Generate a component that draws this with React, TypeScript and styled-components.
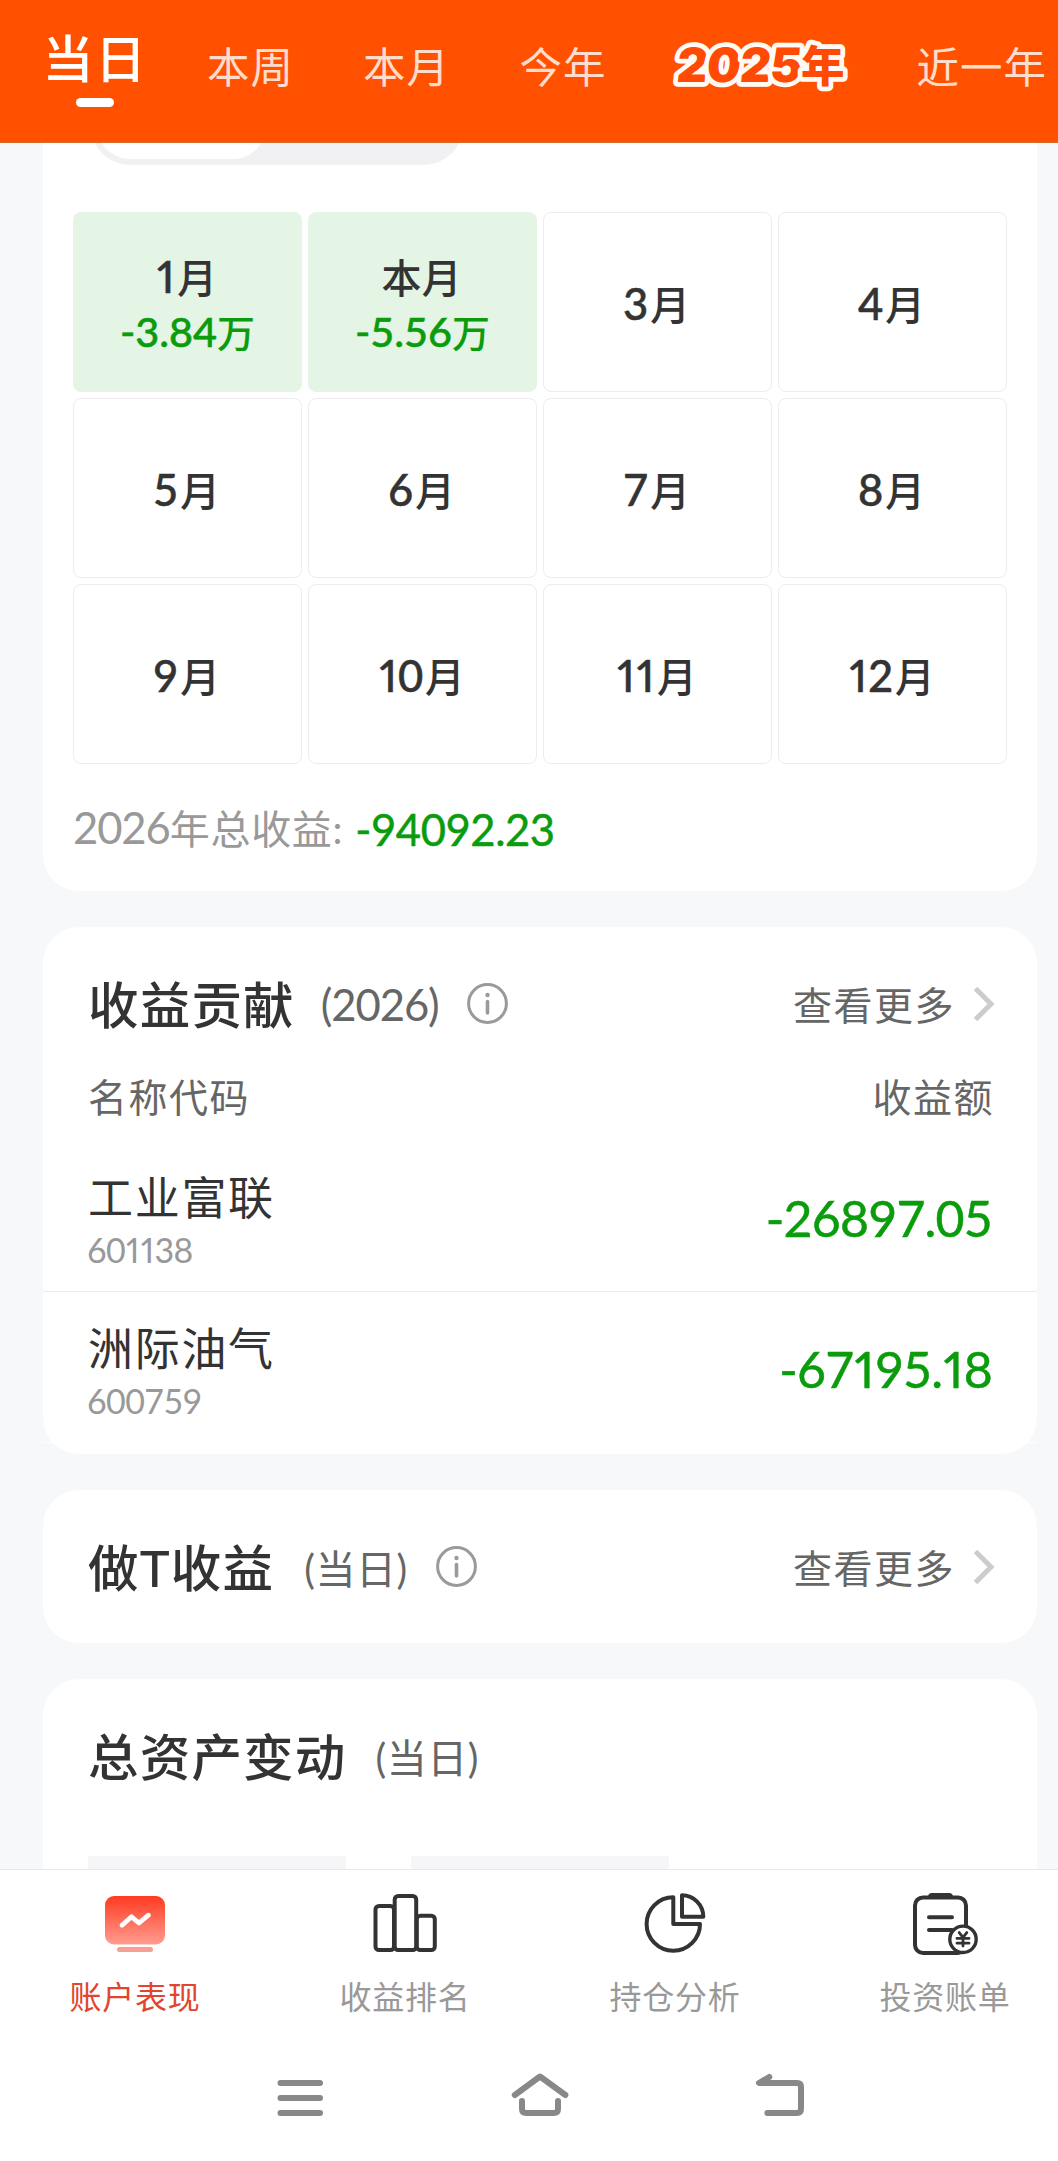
import React from "react";
import styled, { createGlobalStyle } from "styled-components";

const GlobalStyle = createGlobalStyle`
  html, body { margin: 0; padding: 0; overflow: hidden; background: #f7f8fa; }
  * { box-sizing: border-box; }
  svg { display: block; flex: none; }
`;

const GREEN = "#0a9c0c";

const Viewport = styled.div`
  width: 1058px;
  height: 2161px;
  overflow: hidden;
`;

const Page = styled.div`
  width: 1080px;
  height: 2161px;
  display: flex;
  flex-direction: column;
  background: #f7f8fa;
  color: #333;
  font-family: Lato, "Noto Sans CJK SC", sans-serif;
  white-space: nowrap;
`;

/* ---------- figures ---------- */

const FigureText = styled.span<{ $medium?: boolean }>`
  -webkit-text-stroke: ${(p) => (p.$medium ? "0.5px currentColor" : "0")};
`;

const NarrowOne = styled.span`
  margin: 0 0.025em;
  font-feature-settings: "pnum";
`;

const Figures = ({ text, medium }: { text: string; medium?: boolean }) => (
  <FigureText $medium={medium}>
    {text.split(/(1)/).map((part, i) => (part === "1" ? <NarrowOne key={i}>1</NarrowOne> : part))}
  </FigureText>
);

const Num = styled.span`
  font-size: 1.09em;
  line-height: 0;
`;

/* ---------- period tabs ---------- */

const TabBar = styled.header`
  flex: none;
  height: 143px;
  display: flex;
  align-items: flex-start;
  padding: 41px 0 0 43px;
  background: #ff5100;
  border-bottom: 1px solid #d96a2c;
`;

const Tab = styled.div<{ $gap: number }>`
  margin-left: ${(p) => p.$gap}px;
  font-size: 42.5px;
  line-height: 52px;
  letter-spacing: 1px;
  color: #ffdccb;
`;

const ActiveTab = styled.div`
  width: 104px;
  margin-top: -12px;
  display: flex;
  flex-direction: column;
  align-items: center;
  font-size: 51px;
  line-height: 60px;
  letter-spacing: 1.5px;
  font-weight: 500;
  color: #fff;
`;

const Indicator = styled.span`
  width: 38px;
  height: 9px;
  margin-top: 9px;
  border-radius: 5px;
  background: #fff;
`;

const BadgeSvg = styled.svg`
  margin: -19px 0 0 57px;
  overflow: visible;

  text {
    font-weight: 900;
    fill: #ff4a05;
    stroke: #fffaf3;
    stroke-width: 9.5px;
    stroke-linejoin: round;
    paint-order: stroke fill;
  }
`;

const YearBadge = () => (
  <BadgeSvg width="192" height="88" viewBox="0 0 192 88">
    <text x="17" y="60" transform="skewX(-5)" fontFamily="Inter, sans-serif" fontSize="47.5" textLength="125">
      2025
    </text>
    <text x="137" y="59.5" fontFamily="'Noto Sans CJK SC', sans-serif" fontSize="43.5">
      年
    </text>
  </BadgeSvg>
);

/* ---------- cards ---------- */

const Scroll = styled.main`
  flex: 1;
  min-height: 0;
  overflow: hidden;
  padding: 0 43px;
  display: flex;
  flex-direction: column;
  gap: 36px;
`;

const Card = styled.section`
  flex: none;
  background: #fff;
  border-radius: 36px;
`;

const CalendarCard = styled(Card)`
  margin-top: -76px;
  height: 824px;
  padding: 20px 30px 0;
`;

const Segmented = styled.div`
  width: 372px;
  height: 78px;
  margin-left: 18px;
  padding: 6px;
  border-radius: 39px;
  background: #f1f1f4;
`;

const SegmentThumb = styled.div`
  width: 169px;
  height: 66px;
  border-radius: 33px;
  background: #fff;
`;

const MonthGrid = styled.div`
  margin-top: 47px;
  display: grid;
  grid-template-columns: repeat(4, 229px);
  grid-auto-rows: 180px;
  gap: 6px;
`;

const MonthCell = styled.div<{ $filled: boolean }>`
  display: flex;
  flex-direction: column;
  align-items: center;
  justify-content: center;
  padding-top: ${(p) => (p.$filled ? 5 : 6)}px;
  padding-right: 2px;
  border-radius: 8px;
  border: 1px solid ${(p) => (p.$filled ? "#e4f4e5" : "#ededef")};
  background: ${(p) => (p.$filled ? "#e4f4e5" : "#fff")};
  font-size: 40px;
  line-height: 54px;
  font-weight: 500;
`;

const MonthNum = styled(Num)`
  margin-right: 1.5px;
`;

const MonthValue = styled.div`
  font-size: 38px;
  line-height: 54px;
  padding-left: 2px;
  color: ${GREEN};
`;

const TotalRow = styled.div`
  display: flex;
  align-items: center;
  height: 129px;
  font-size: 40px;
  line-height: 56px;
  letter-spacing: 0.7px;
  color: #999;
`;

const TightNum = styled(Num)`
  letter-spacing: -1.1px;
`;

const TotalValue = styled.span`
  margin-left: 12px;
  font-size: 43.5px;
  letter-spacing: -0.4px;
  color: ${GREEN};
`;

const SectionHead = styled.div`
  display: flex;
  align-items: center;
  height: 68px;
  margin-top: 44px;
  padding: 0 45px;
`;

const Title = styled.h2`
  margin: 0;
  font-size: 50.5px;
  line-height: 68px;
  letter-spacing: 1.2px;
  font-weight: 500;
`;

const Scope = styled.span<{ $gap?: number }>`
  margin-left: ${(p) => p.$gap ?? 26}px;
  padding-top: 1px;
  font-size: 40px;
  line-height: 68px;
  letter-spacing: 0.5px;
  color: #666;
`;

const InfoWrap = styled.span`
  margin: -4px 0 0 28px;
`;

const More = styled.span`
  margin-left: auto;
  margin-right: -3px;
  display: flex;
  align-items: center;
  gap: 18px;
  font-size: 39px;
  line-height: 68px;
  letter-spacing: 1.5px;
  color: #666;
`;

const ColumnHead = styled.div`
  display: flex;
  justify-content: space-between;
  align-items: center;
  height: 102px;
  padding: 14px 43px 0 45px;
  font-size: 39px;
  line-height: 56px;
  letter-spacing: 1.5px;
  color: #666;
`;

const StockRow = styled.div`
  display: flex;
  justify-content: space-between;
  align-items: center;
  height: 151px;
  padding: 12px 45px 0 44px;
  border-bottom: 1px solid #ebebed;
  &:last-child { border-bottom-color: #fff; }
`;

const StockName = styled.div`
  padding-left: 1px;
  font-size: 45px;
  line-height: 56px;
  letter-spacing: 1.7px;
`;

const StockCode = styled.div`
  font-size: 34px;
  line-height: 48px;
  letter-spacing: -0.6px;
  color: #999;
`;

const StockValue = styled.div`
  margin-top: -8px;
  font-size: 50px;
  line-height: 60px;
  letter-spacing: -0.8px;
  color: ${GREEN};
`;

const ContributionCard = styled(Card)`
  height: 527px;
  padding-top: 0.1px;
`;

const TradeCard = styled(Card)`
  height: 153px;
  padding-top: 0.1px;
`;

const AssetCard = styled(Card)`
  height: 400px;
  padding-top: 0.1px;
`;

const Skeletons = styled.div`
  display: flex;
  gap: 65px;
  margin: 65px 45px 0;
`;

const Skeleton = styled.div`
  width: 258px;
  height: 60px;
  background: #f6f6f9;
`;

/* ---------- bottom bars ---------- */

const BottomNav = styled.nav`
  flex: none;
  height: 176px;
  display: grid;
  grid-template-columns: repeat(4, 270px);
  background: #fff;
  border-top: 1px solid #e9e9eb;
`;

const NavItem = styled.div<{ $active?: boolean }>`
  display: flex;
  flex-direction: column;
  align-items: center;
  padding-top: 22px;
  gap: 17px;
  font-size: 32px;
  line-height: 48px;
  letter-spacing: 0.8px;
  color: ${(p) => (p.$active ? "#e2452e" : "#999")};
`;

const SystemBar = styled.footer`
  flex: none;
  height: 116px;
  display: flex;
  justify-content: center;
  padding-top: 23px;
  gap: 180px;
  background: #fff;
`;

const InfoIcon = () => (
  <InfoWrap>
    <svg width="41" height="41" viewBox="0 0 41 41" fill="none" stroke="#9a9a9a">
      <circle cx="20.5" cy="20.5" r="18.9" strokeWidth="3" />
      <path d="M20.5 18.5V30" strokeWidth="3.6" strokeLinecap="round" />
      <circle cx="20.5" cy="12" r="2.2" fill="#9a9a9a" stroke="none" />
    </svg>
  </InfoWrap>
);

const Chevron = () => (
  <svg width="22" height="36" viewBox="0 0 22 36" fill="none" stroke="#ccc" strokeWidth="5">
    <path d="M2.5 1.5L18 17L2.5 32.5" />
  </svg>
);

const MonitorIcon = () => (
  <svg width="64" height="64" viewBox="0 0 64 64" fill="none">
    <defs>
      <linearGradient id="monitor" x1="0" y1="0" x2="0" y2="1">
        <stop offset="0" stopColor="#ff3a22" />
        <stop offset="1" stopColor="#ff9d8f" />
      </linearGradient>
    </defs>
    <rect x="2" y="4" width="60" height="48.5" rx="9" fill="url(#monitor)" />
    <rect x="14" y="55" width="36" height="5" rx="2.5" fill="#f79f92" />
    <path d="M19 33.2L28.5 24.8L36 31L45.4 23.2" stroke="#fff" strokeWidth="4.8" strokeLinecap="round" strokeLinejoin="round" />
  </svg>
);

const RankIcon = () => (
  <svg width="64" height="64" viewBox="0 0 64 64" fill="none" stroke="#333" strokeWidth="4">
    <rect x="2.5" y="14" width="18.5" height="44" rx="3.5" />
    <rect x="21.7" y="4" width="21.5" height="54" rx="3.5" />
    <rect x="43.8" y="23.7" width="18" height="34.3" rx="3.5" />
  </svg>
);

const PieIcon = () => (
  <svg width="64" height="64" viewBox="0 0 64 64" fill="none" stroke="#333" strokeWidth="4" strokeLinejoin="round">
    <path d="M30.3 5.3V32H57A26.7 26.7 0 1 1 30.3 5.3Z" />
    <path d="M39 3.3V24.7H60.3A21.4 21.4 0 0 0 39 3.3Z" />
  </svg>
);

const BillIcon = () => (
  <svg width="66" height="64" viewBox="0 0 66 64" fill="none" stroke="#333" strokeWidth="4" strokeLinecap="round">
    <rect x="3" y="5.4" width="51" height="55.6" rx="8" />
    <path d="M20 1H37Q41 1 41 5H16Q16 1 20 1Z" fill="#333" stroke="none" />
    <path d="M17 25.3H40M17 38H40" />
    <circle cx="51" cy="47.3" r="13.2" fill="#fff" strokeWidth="3.4" />
    <path d="M47.2 40.6L51 45.4L54.8 40.6M51 45.4V54M45 46.4H57M45 51.2H57" strokeWidth="2.8" />
  </svg>
);

const MenuIcon = () => (
  <svg width="60" height="60" viewBox="0 0 60 60" fill="none" stroke="#888" strokeWidth="6" strokeLinecap="round">
    <path d="M10.5 15H50M10.5 30H50M10.5 45H50" />
  </svg>
);

const HomeIcon = () => (
  <svg width="60" height="60" viewBox="0 0 60 60" fill="none" stroke="#888" strokeWidth="6" strokeLinecap="round" strokeLinejoin="round">
    <path d="M4.8 27L30 8.5L55.4 27" />
    <path d="M12 33V41Q12 45 16 45H44Q48 45 48 41V33" />
  </svg>
);

const BackIcon = () => (
  <svg width="60" height="60" viewBox="0 0 60 60" fill="none" stroke="#888" strokeWidth="6" strokeLinecap="round" strokeLinejoin="round">
    <path d="M19.3 9L9 15H47Q51 15 51 19V41Q51 45 47 45H17.4" />
  </svg>
);

type Month = { num?: string; label: string; value?: string };

const months: Month[] = [
  { num: "1", label: "月", value: "-3.84" },
  { label: "本月", value: "-5.56" },
  ...["3", "4", "5", "6", "7", "8", "9", "10", "11", "12"].map((num) => ({ num, label: "月" })),
];

const stocks = [
  { name: "工业富联", code: "601138", value: "-26897.05" },
  { name: "洲际油气", code: "600759", value: "-67195.18" },
];

const navItems = [
  { label: "账户表现", Icon: MonitorIcon, active: true },
  { label: "收益排名", Icon: RankIcon },
  { label: "持仓分析", Icon: PieIcon },
  { label: "投资账单", Icon: BillIcon },
];

export default function App() {
  return (
    <Viewport>
      <GlobalStyle />
      <Page>
        <TabBar>
          <ActiveTab>
            当日
            <Indicator />
          </ActiveTab>
          <Tab $gap={60}>本周</Tab>
          <Tab $gap={69}>本月</Tab>
          <Tab $gap={69.5}>今年</Tab>
          <YearBadge />
          <Tab $gap={61}>近一年</Tab>
        </TabBar>

        <Scroll>
          <CalendarCard>
            <Segmented>
              <SegmentThumb />
            </Segmented>
            <MonthGrid>
              {months.map((m, i) => (
                <MonthCell key={i} $filled={!!m.value}>
                  <div>
                    {m.num && (
                      <MonthNum>
                        <Figures text={m.num} medium />
                      </MonthNum>
                    )}
                    {m.label}
                  </div>
                  {m.value && (
                    <MonthValue>
                      <Num>
                        <Figures text={m.value} medium />
                      </Num>
                      万
                    </MonthValue>
                  )}
                </MonthCell>
              ))}
            </MonthGrid>
            <TotalRow>
              <span>
                <TightNum>2026</TightNum>年总收益:
              </span>
              <TotalValue>
                <Figures text="-94092.23" medium />
              </TotalValue>
            </TotalRow>
          </CalendarCard>

          <ContributionCard>
            <SectionHead>
              <Title>收益贡献</Title>
              <Scope>
                <TightNum>(2026)</TightNum>
              </Scope>
              <InfoIcon />
              <More>
                查看更多
                <Chevron />
              </More>
            </SectionHead>
            <ColumnHead>
              <span>名称代码</span>
              <span>收益额</span>
            </ColumnHead>
            {stocks.map((s) => (
              <StockRow key={s.code}>
                <div>
                  <StockName>{s.name}</StockName>
                  <StockCode>
                    <Figures text={s.code} />
                  </StockCode>
                </div>
                <StockValue>
                  <Figures text={s.value} medium />
                </StockValue>
              </StockRow>
            ))}
          </ContributionCard>

          <TradeCard>
            <SectionHead>
              <Title>做T收益</Title>
              <Scope $gap={30}>(当日)</Scope>
              <InfoIcon />
              <More>
                查看更多
                <Chevron />
              </More>
            </SectionHead>
          </TradeCard>

          <AssetCard>
            <SectionHead>
              <Title>总资产变动</Title>
              <Scope $gap={29}>(当日)</Scope>
            </SectionHead>
            <Skeletons>
              <Skeleton />
              <Skeleton />
            </Skeletons>
          </AssetCard>
        </Scroll>

        <BottomNav>
          {navItems.map(({ label, Icon, active }) => (
            <NavItem key={label} $active={active}>
              <Icon />
              {label}
            </NavItem>
          ))}
        </BottomNav>
        <SystemBar>
          <MenuIcon />
          <HomeIcon />
          <BackIcon />
        </SystemBar>
      </Page>
    </Viewport>
  );
}
